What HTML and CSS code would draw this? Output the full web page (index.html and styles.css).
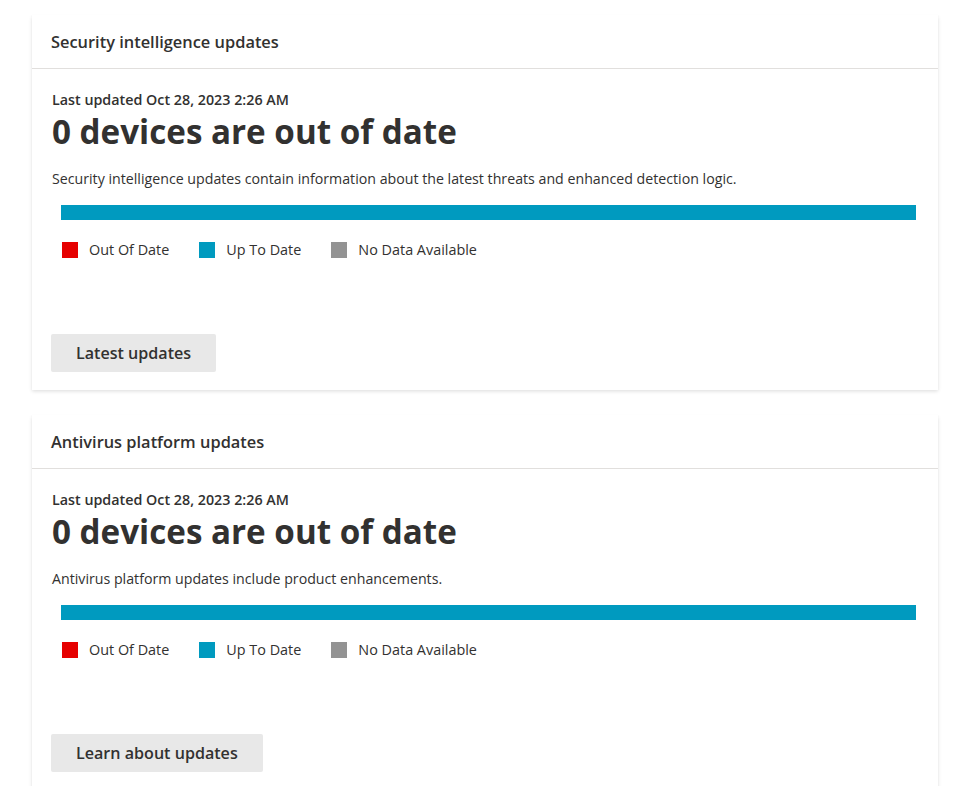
FILE: index.html
```html
<!DOCTYPE html>
<html lang="en">
<head>
<meta charset="utf-8">
<title>Updates</title>
<link rel="stylesheet" href="styles.css">
</head>
<body>
<main class="page">
  <section class="card">
    <header class="card-header"><h2 class="card-title">Security intelligence updates</h2></header>
    <div class="card-body">
      <div class="updated">Last updated Oct 28, 2023 2:26 AM</div>
      <h1 class="headline">0 devices are out of date</h1>
      <p class="desc">Security intelligence updates contain information about the latest threats and enhanced detection logic.</p>
      <div class="bar"><div class="seg seg-up" style="width:100%"></div></div>
      <ul class="legend">
        <li class="legend-item"><span class="swatch sw-out"></span>Out Of Date</li>
        <li class="legend-item"><span class="swatch sw-up"></span>Up To Date</li>
        <li class="legend-item"><span class="swatch sw-na"></span>No Data Available</li>
      </ul>
      <button class="btn" type="button">Latest updates</button>
    </div>
  </section>
  <section class="card">
    <header class="card-header"><h2 class="card-title">Antivirus platform updates</h2></header>
    <div class="card-body">
      <div class="updated">Last updated Oct 28, 2023 2:26 AM</div>
      <h1 class="headline">0 devices are out of date</h1>
      <p class="desc">Antivirus platform updates include product enhancements.</p>
      <div class="bar"><div class="seg seg-up" style="width:100%"></div></div>
      <ul class="legend">
        <li class="legend-item"><span class="swatch sw-out"></span>Out Of Date</li>
        <li class="legend-item"><span class="swatch sw-up"></span>Up To Date</li>
        <li class="legend-item"><span class="swatch sw-na"></span>No Data Available</li>
      </ul>
      <button class="btn" type="button">Learn about updates</button>
    </div>
  </section>
</main>
</body>
</html>
```

FILE: styles.css
```css
* { box-sizing: border-box; }
html, body { margin: 0; padding: 0; background: #ffffff; }
body {
  font-family: "Open Sans", "Noto Sans", "Liberation Sans", sans-serif;
  color: #323130;
}
.page {
  display: flex;
  flex-direction: column;
  gap: 25px;
  padding: 15px 17px 0 32px;
}
.card {
  background: #fff;
  box-shadow: 0 1.6px 3.6px rgba(0,0,0,0.13), 0 0.3px 0.9px rgba(0,0,0,0.11);
}
.card-header {
  height: 54px;
  display: flex;
  align-items: center;
  padding: 0 19px;
  border-bottom: 1px solid #e1dfdd;
}
.card-title {
  margin: 0;
  font-size: 16.4px;
  font-weight: 600;
  line-height: 22px;
}
.card-body {
  padding: 22px 20px 18px 20px;
  display: flex;
  flex-direction: column;
  align-items: flex-start;
}
.updated {
  font-size: 14.3px;
  font-weight: 600;
  line-height: 18px;
}
.headline {
  margin: 0;
  font-size: 33.2px;
  font-weight: 700;
  line-height: 46px;
}
.desc {
  margin: 14px 0 0 0;
  font-size: 14.2px;
  line-height: 20px;
}
.bar {
  align-self: stretch;
  margin: 16px 2px 0 9px;
  height: 15px;
  display: flex;
  background: #f3f2f1;
}
.seg { height: 100%; }
.seg-up { background: #009abf; }
.legend {
  list-style: none;
  margin: 21px 0 0 10px;
  padding: 0;
  display: flex;
  gap: 30px;
}
.legend-item {
  display: flex;
  align-items: center;
  gap: 11px;
  font-size: 14.4px;
  line-height: 17px;
}
.swatch { width: 16px; height: 16px; display: block; }
.sw-out { background: #e60000; }
.sw-up { background: #009abf; }
.sw-na { background: #939393; }
.btn {
  margin: 76px 0 0 -1px;
  height: 38px;
  padding: 0 25px;
  border: 0;
  border-radius: 2px;
  background: #e8e8e8;
  color: #323130;
  font-family: inherit;
  font-size: 16.1px;
  font-weight: 600;
}
```
